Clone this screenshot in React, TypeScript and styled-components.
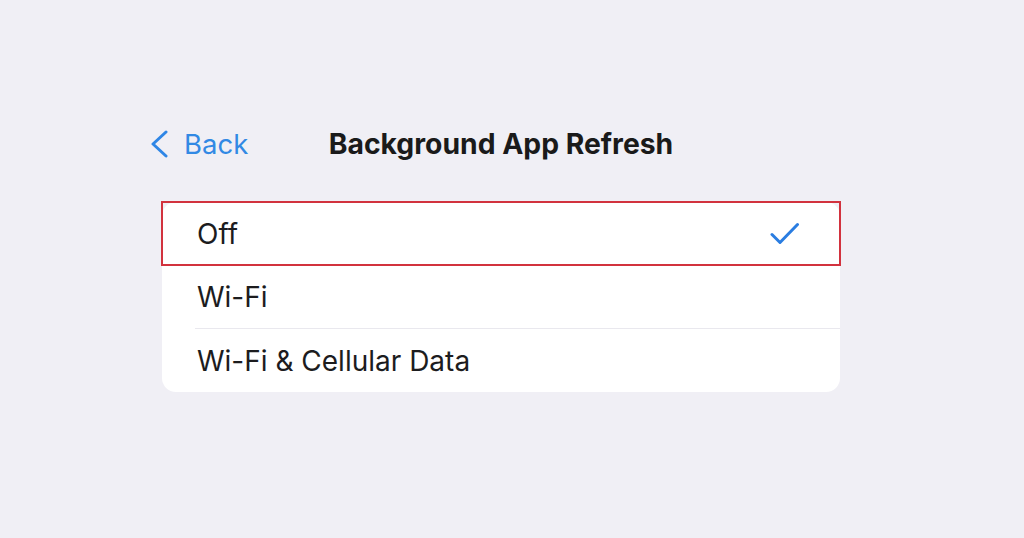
import styled, { createGlobalStyle } from "styled-components";

const GlobalStyle = createGlobalStyle`
  html, body {
    margin: 0;
    padding: 0;
    background: #f0eff5;
  }
  body {
    font-family: Inter, "Noto Sans", "Liberation Sans", sans-serif;
    -webkit-font-smoothing: antialiased;
  }
`;

const Page = styled.div`
  width: 1024px;
  height: 538px;
  padding: 127px 0px 0px 162px;
  box-sizing: border-box;
`;

const Column = styled.div`
  width: 678px;
  display: flex;
  flex-flow: column nowrap;
`;

const NavBar = styled.div`
  display: grid;
  grid-template-columns: 1fr auto 1fr;
  align-items: center;
  height: 30px;
  margin: 0px 0px 45px -12px;
`;

const BackButton = styled.button`
  display: flex;
  align-items: center;
  gap: 15px;
  padding: 0;
  border: none;
  background: none;
  color: #3289e4;
  font-family: inherit;
  font-size: 27.5px;
  cursor: pointer;
  justify-self: start;
`;

const Title = styled.h1`
  margin: 0px 0px 0px 12px;
  font-size: 28.3px;
  font-weight: 700;
  color: #1a1a1a;
`;

const Card = styled.div`
  background: #ffffff;
  border-radius: 14px;
  display: flex;
  flex-flow: column nowrap;
`;

const Row = styled.div<{ $highlighted?: boolean }>`
  height: 63px;
  display: flex;
  align-items: center;
  justify-content: space-between;
  padding: 0px 40px 0px 35px;
  box-sizing: border-box;
  font-size: 28px;
  color: #1c1c1e;
  outline: ${props => (props.$highlighted ? "2px solid #d2323e" : "none")};
  outline-offset: -1px;
`;

const Separator = styled.div`
  height: 1px;
  margin-left: 33px;
  background: #e9e8ee;
`;

function Chevron(): JSX.Element {
  return (
    <svg width="19" height="28" viewBox="0 0 19 28" fill="none">
      <path d="M16 2L3 14L16 26" stroke="#2f86e6" strokeWidth="3" strokeLinecap="round" strokeLinejoin="round" />
    </svg>
  );
}

function Check(): JSX.Element {
  return (
    <svg width="30" height="24" viewBox="0 0 30 24" fill="none">
      <path d="M2 12.5L10 20.5L27.5 2.5" stroke="#2a7de1" strokeWidth="3" strokeLinecap="round" strokeLinejoin="round" />
    </svg>
  );
}

const options = [
  { label: "Off", selected: true },
  { label: "Wi-Fi", selected: false },
  { label: "Wi-Fi & Cellular Data", selected: false },
];

function App(): JSX.Element {
  return (
    <>
      <GlobalStyle />
      <Page>
        <Column>
          <NavBar>
            <BackButton>
              <Chevron />
              Back
            </BackButton>
            <Title>Background App Refresh</Title>
            <span />
          </NavBar>
          <Card>
            {options.map((option, i) => (
              <div key={option.label}>
                {i === 2 && <Separator />}
                <Row $highlighted={option.selected}>
                  <span>{option.label}</span>
                  {option.selected && <Check />}
                </Row>
              </div>
            ))}
          </Card>
        </Column>
      </Page>
    </>
  );
}

export default App;
